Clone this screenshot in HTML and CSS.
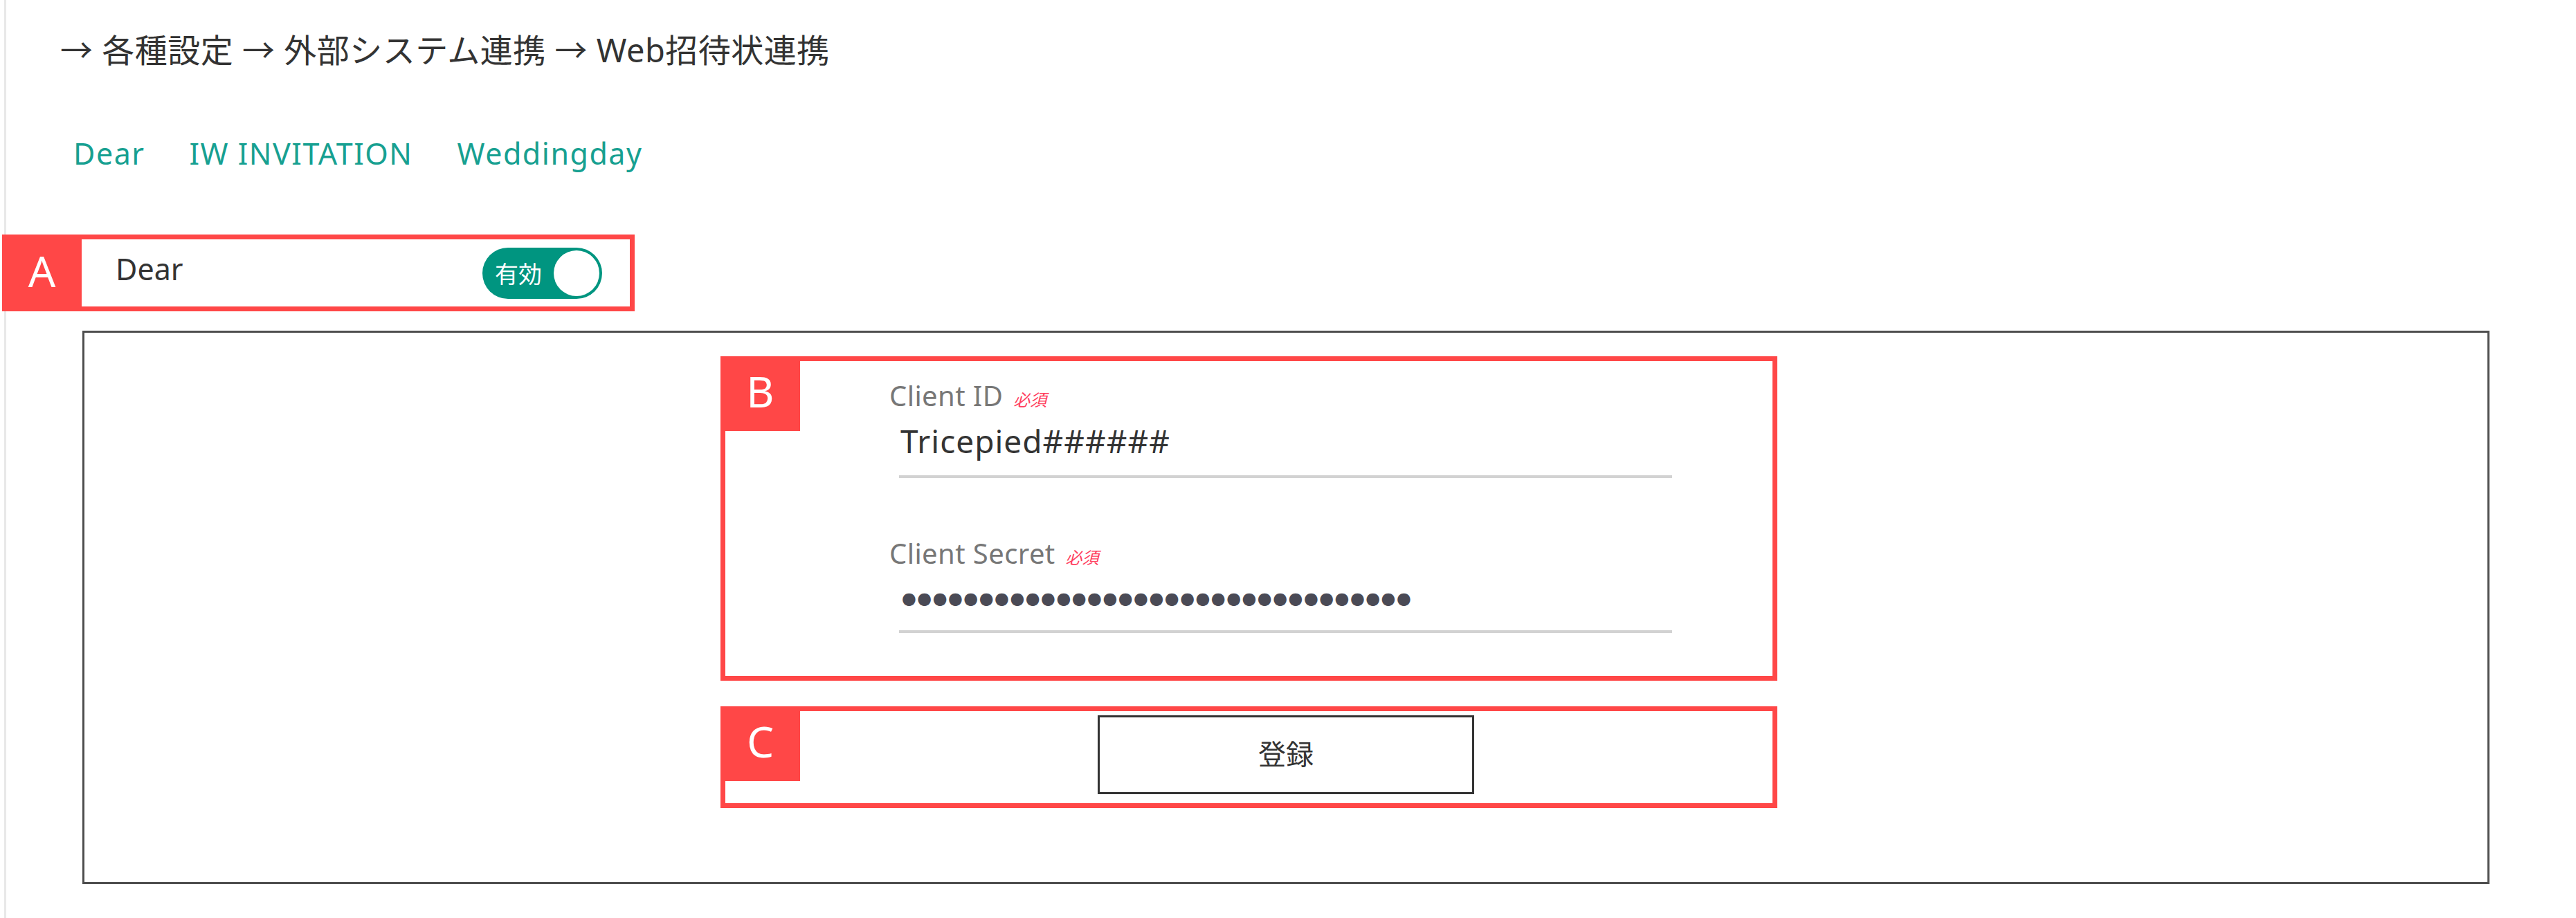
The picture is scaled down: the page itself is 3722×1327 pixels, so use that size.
FILE: index.html
```html
<!DOCTYPE html>
<html lang="ja">
<head>
    <meta charset="UTF-8">
    <title>Web招待状連携</title>
    <meta name="viewport" content="width=device-width, initial-scale=1.0">
    <link rel="stylesheet" href="styles.css">
</head>
<body>
    <div class="page">
        <div class="breadcrumb">→ 各種設定 → 外部システム連携 → Web招待状連携</div>

        <nav class="tabs">
            <a class="tab">Dear</a>
            <a class="tab">IW INVITATION</a>
            <a class="tab">Weddingday</a>
        </nav>

        <div class="note note-a">
            <span class="note-tag">A</span>
            <div class="service-row">
                <span class="service-name">Dear</span>
                <span class="toggle">
                    <span class="toggle-text">有効</span>
                    <span class="toggle-knob"></span>
                </span>
            </div>
        </div>

        <div class="panel">
            <div class="note note-b">
                <span class="note-tag">B</span>
                <div class="fields">
                    <div class="field">
                        <div class="field-label">Client ID <span class="required">必須</span></div>
                        <div class="field-input">Tricepied######</div>
                    </div>
                    <div class="field">
                        <div class="field-label">Client Secret <span class="required">必須</span></div>
                        <div class="field-input secret">●●●●●●●●●●●●●●●●●●●●●●●●●●●●●●●●●</div>
                    </div>
                </div>
            </div>

            <div class="note note-c">
                <span class="note-tag">C</span>
                <button class="submit-btn">登録</button>
            </div>
        </div>
    </div>
</body>
</html>
```

FILE: styles.css
```css
html, body {
    margin: 0;
    padding: 0;
    background: #fff;
    font-family: "Noto Sans", "Noto Sans CJK JP", sans-serif;
    color: #333;
}
.page {
    margin-left: 6px;
    border-left: 3px solid #e8e8e8;
    min-height: 100vh;
    box-sizing: border-box;
    padding-top: 39px;
}
.breadcrumb {
    padding-left: 78px;
    font-size: 47px;
    line-height: 66px;
    letter-spacing: 0.5px;
    color: #333;
}
.tabs {
    display: flex;
    gap: 64px;
    padding-left: 97px;
    margin-top: 85px;
}
.tab {
    font-size: 43px;
    line-height: 63px;
    letter-spacing: 1.5px;
    color: #17a091;
    text-decoration: none;
}
.note {
    position: relative;
    border: 7px solid #ff4747;
    box-sizing: border-box;
    background: #fff;
}
.note-tag {
    position: absolute;
    top: -7px;
    left: -7px;
    width: 115px;
    height: 108px;
    background: #ff4747;
    color: #fff;
    font-size: 62px;
    line-height: 100px;
    text-align: center;
}
.note-a {
    margin: 86px 0 0 -6px;
    width: 914px;
    height: 111px;
}
.note-a .note-tag {
    height: 111px;
    line-height: 104px;
}
.service-row {
    display: flex;
    align-items: center;
    height: 100%;
    padding: 0 40px 0 157px;
    box-sizing: border-box;
}
.service-name {
    font-size: 43px;
    margin-bottom: 12px;
}
.toggle {
    margin-left: auto;
    display: flex;
    align-items: center;
    width: 173px;
    height: 74px;
    padding: 0 4px 0 18px;
    box-sizing: border-box;
    border-radius: 37px;
    background: #009580;
}
.toggle-text {
    font-family: "Noto Sans CJK JP", sans-serif;
    font-size: 34px;
    color: #fff;
}
.toggle-knob {
    margin-left: auto;
    width: 66px;
    height: 66px;
    border-radius: 50%;
    background: #fff;
}
.panel {
    margin: 28px 0 0 110px;
    width: 3478px;
    border: 3px solid #4e4e4e;
    box-sizing: border-box;
    padding: 34px 0 107px 919px;
}
.note-b {
    width: 1527px;
    height: 469px;
    padding: 25px 0 0 251px;
}
.fields {
    width: 1117px;
}
.field + .field {
    margin-top: 84px;
}
.field-label {
    height: 50px;
    margin: 0 0 10px -14px;
    font-size: 40px;
    line-height: 50px;
    letter-spacing: 0.4px;
    color: #777;
    white-space: nowrap;
}
.required {
    font-family: "Noto Sans CJK JP", sans-serif;
    font-size: 24px;
    line-height: 1;
    color: #ff4060;
    margin-left: 4px;
    font-style: italic;
    letter-spacing: 0;
}
.field-input {
    height: 60px;
    font-size: 46px;
    line-height: 60px;
    letter-spacing: 1px;
    padding: 0 0 20px 2px;
    border-bottom: 4px solid #d2d2d2;
    color: #333;
    overflow: hidden;
}
.field-input.secret {
    font-family: "DejaVu Sans", sans-serif;
    font-size: 24px;
    letter-spacing: 1.4px;
    color: #4a4a55;
    padding-left: 4px;
    padding-bottom: 16px;
}
.note-c {
    margin-top: 37px;
    width: 1527px;
    height: 147px;
    padding: 6px 0 0 538px;
}
.submit-btn {
    display: block;
    width: 544px;
    height: 114px;
    border: 3px solid #333;
    background: #fff;
    font-family: "Noto Sans CJK JP", sans-serif;
    font-size: 40px;
    color: #333;
    padding: 0 0 6px;
}
```
